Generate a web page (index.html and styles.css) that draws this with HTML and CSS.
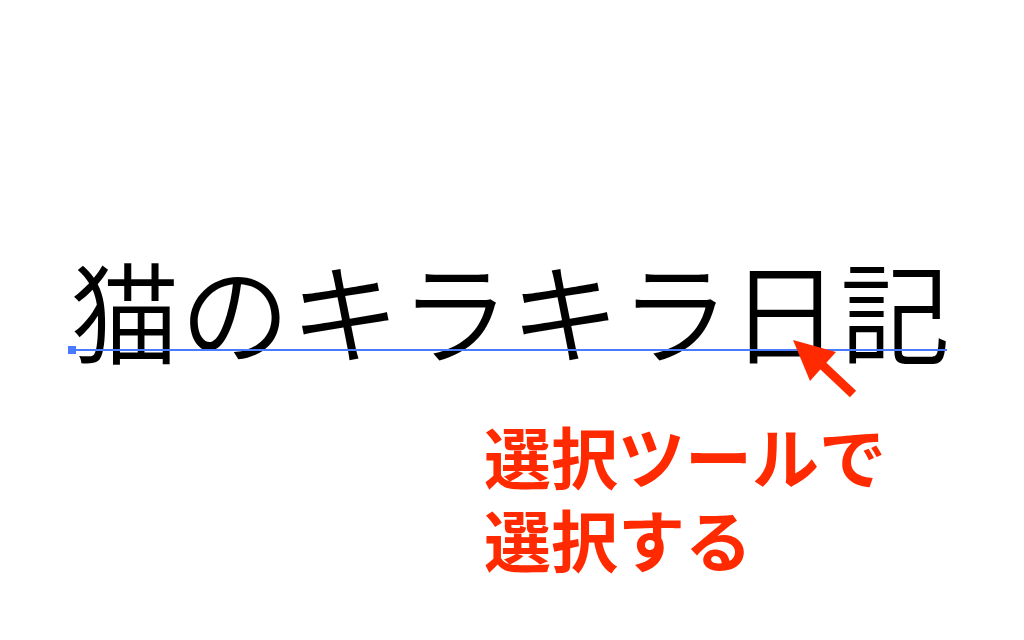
FILE: index.html
```html
<!DOCTYPE html>
<html lang="ja">
<head>
<meta charset="utf-8">
<title>猫のキラキラ日記</title>
<link rel="stylesheet" href="styles.css">
</head>
<body>
<main class="canvas">
  <div class="title-wrap">
    <h1 class="title">猫のキラキラ日記</h1>
    <div class="baseline"><span class="handle"></span></div>
  </div>
  <p class="note">選択ツールで<br>選択する</p>
  <svg class="arrow" width="1024" height="640" viewBox="0 0 1024 640" aria-hidden="true">
    <line x1="818" y1="361" x2="853" y2="394" stroke="#ff2a00" stroke-width="9" />
    <polygon points="793,340 836,352 810,381" fill="#ff2a00" />
  </svg>
</main>
</body>
</html>
```
FILE: styles.css
```css
html, body {
  margin: 0;
  padding: 0;
  background: #ffffff;
}
.canvas {
  position: relative;
  width: 1024px;
  height: 640px;
  box-sizing: border-box;
  padding: 253px 0 0 70px;
  overflow: hidden;
  font-family: "Noto Sans CJK JP", "Noto Sans", sans-serif;
}
.title-wrap {
  position: relative;
  width: 880px;
}
.title {
  margin: 0;
  font-size: 110px;
  line-height: 110px;
  font-weight: 350;
  color: #000000;
  letter-spacing: 0;
  white-space: nowrap;
}
.baseline {
  position: absolute;
  left: -2px;
  top: 96px;
  width: 879px;
  height: 1.5px;
  background: #4a7bff;
}
.handle {
  position: absolute;
  left: 0;
  top: -3.5px;
  width: 8px;
  height: 8px;
  background: #4a7bff;
}
.note {
  margin: 50px 0 0 414px;
  font-size: 67px;
  line-height: 83px;
  font-weight: 700;
  color: #ff2a00;
}
.arrow {
  position: absolute;
  left: 0;
  top: 0;
  pointer-events: none;
}
```
